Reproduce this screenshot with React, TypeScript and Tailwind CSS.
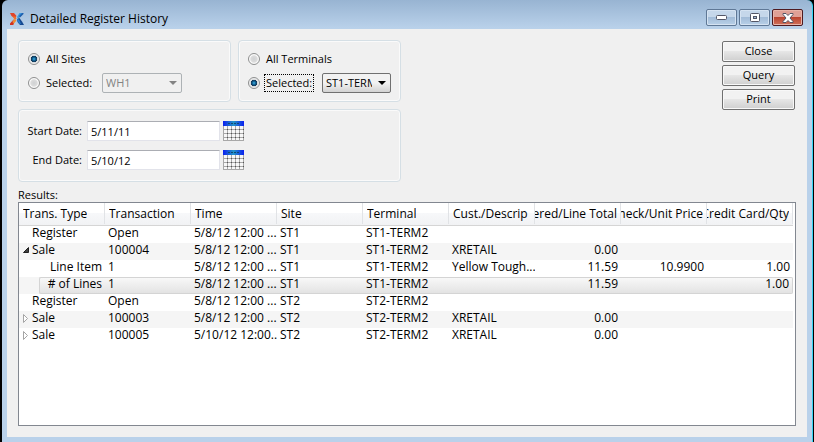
import React from "react";

const UI = "font-['Open_Sans',sans-serif]";

function Logo() {
  return (
    <svg width="14" height="12" viewBox="0 0 14 12" className="shrink-0" aria-hidden="true">
      <path d="M0 0h4l2.500 3-1.500 2.500L1.500 3z" fill="#e0452a" />
      <path d="M2.500 3.500h3l1 2-1.500 1.500z" fill="#f0702a" />
      <path d="M4 6l2.500 1.500L3.500 11l-1.500-1z" fill="#f08a2e" />
      <path d="M4 6 2.500 9 4 11 3 12H0V10.500z" fill="#d2321e" />
      <path d="M9.500 0H13l-1 2-4 4-1-2z" fill="#3a9be0" />
      <path d="M12 0h1.500v1L10 4.500 9 3z" fill="#1f5fae" />
      <path d="M7 6l2.500-1L12 8.500 14 12h-4L7.500 9z" fill="#174a92" />
      <path d="M7 6l2 .500L11 11l-2-.500z" fill="#2b7fd0" />
    </svg>
  );
}

function CalendarIcon() {
  return (
    <svg width="21" height="20" viewBox="0 0 21 20" aria-hidden="true">
      <defs>
        <linearGradient id="calHead" x1="0" x2="1" y1="0" y2="0">
          <stop offset="0" stopColor="#0a1ef0" />
          <stop offset=".5" stopColor="#2394c8" />
          <stop offset="1" stopColor="#0a1ef0" />
        </linearGradient>
      </defs>
      <rect width="21" height="20" fill="#f8f8f8" />
      <rect width="21" height="5" fill="url(#calHead)" />
      <path d="M5 2.500h11" stroke="#114a70" strokeDasharray="2 1" />
      <path d="M.5 5v15M4.500 5v15M8.500 5v15M12.500 5v15M16.500 5v15M20.500 5v15M0 8.500h21M0 12.500h21M0 16.500h21M0 19.500h21" stroke="#a8a8a8" />
      <path d="M4 8.500h17M4 12.500h17M4 16.500h17" stroke="#555" strokeDasharray="1 3" />
    </svg>
  );
}

function Radio(props: { name: string; label: string; checked?: boolean; focus?: boolean }) {
  return (
    <label className="flex h-5 items-center gap-1">
      <input
        type="radio"
        name={props.name}
        defaultChecked={props.checked}
        className="size-3 appearance-none rounded-full border border-[#8e8f8f] bg-[radial-gradient(circle,#cfd1d3_0,#dcdcdc_45%,#fafafa_60%)] checked:bg-[radial-gradient(circle_at_50%_50%,#3fb4e8_0,#0f5b8c_25%,#12304c_45%,#d8dadc_50%,#f4f4f4_70%)]"
      />
      <span className={`border border-dotted px-px leading-4 ${props.focus ? "border-black" : "border-transparent"}`}>
        {props.label}
      </span>
    </label>
  );
}

function Combo(props: { label: string; value: string; disabled?: boolean; width: string }) {
  return (
    <div className={`relative h-5 ${props.width}`}>
      <select
        aria-label={props.label}
        disabled={props.disabled}
        className={`size-full appearance-none overflow-hidden rounded-xs border pr-[18px] pl-[3px] ${
          props.disabled
            ? "border-[#adb2b5] bg-[#f0f0f0] text-[#838383]"
            : "border-[#707070] bg-linear-to-b from-[#f2f2f2] from-50% to-[#d2d2d2] text-black"
        }`}
      >
        <option>{props.value}</option>
      </select>
      <svg width="8" height="4" viewBox="0 0 8 4" className="pointer-events-none absolute top-2 right-[5px]" aria-hidden="true">
        <path d="M0 0h8L4 4z" fill={props.disabled ? "#838383" : "#000"} />
      </svg>
    </div>
  );
}

function DateRow(props: { id: string; label: string; value: string }) {
  return (
    <div className="flex h-5 items-center">
      <label htmlFor={props.id} className="w-[63px] text-right">
        {props.label}
      </label>
      <input
        id={props.id}
        type="text"
        defaultValue={props.value}
        className="ml-[5px] h-5 w-[133px] border border-[#e2e3ea] border-t-[#abadb3] bg-white px-[3px]"
      />
      <button type="button" aria-label={`Pick ${props.label}`} className="ml-[3px]">
        <CalendarIcon />
      </button>
    </div>
  );
}

const PANEL = "rounded-sm border border-[#d5dfe5] shadow-[inset_0_0_0_1px_#fafafa]";

const columns = ["Trans. Type", "Transaction", "Time", "Site", "Terminal", "Cust./Descrip", "ered/Line Total", "Check/Unit Price", "Credit Card/Qty"];

type Row = { kind: "leaf" | "open" | "closed" | "child"; cells: string[]; selected?: boolean };

const rows: Row[] = [
  { kind: "leaf", cells: ["Register", "Open", "5/8/12 12:00 ...", "ST1", "ST1-TERM2", "", "", "", ""] },
  { kind: "open", cells: ["Sale", "100004", "5/8/12 12:00 ...", "ST1", "ST1-TERM2", "XRETAIL", "0.00", "", ""] },
  { kind: "child", cells: ["Line Item", "1", "5/8/12 12:00 ...", "ST1", "ST1-TERM2", "Yellow Tough...", "11.59", "10.9900", "1.00"] },
  { kind: "child", cells: ["# of Lines", "1", "5/8/12 12:00 ...", "ST1", "ST1-TERM2", "", "11.59", "", "1.00"], selected: true },
  { kind: "leaf", cells: ["Register", "Open", "5/8/12 12:00 ...", "ST2", "ST2-TERM2", "", "", "", ""] },
  { kind: "closed", cells: ["Sale", "100003", "5/8/12 12:00 ...", "ST2", "ST2-TERM2", "XRETAIL", "0.00", "", ""] },
  { kind: "closed", cells: ["Sale", "100005", "5/10/12 12:00...", "ST2", "ST2-TERM2", "XRETAIL", "0.00", "", ""] },
];

const SELECTED = "border-y border-[#d4d4d4] bg-linear-to-b from-[#f8f8f8] to-[#e3e3e3]";

function TreeCell({ row }: { row: Row }) {
  const text = row.cells[0];
  if (row.kind === "child") {
    return (
      <div className={`ml-5 flex h-[17px] items-center justify-end rounded-l-xs pr-[3px] pb-0.5 ${row.selected ? `border-l ${SELECTED}` : ""}`}>
        {text}
      </div>
    );
  }
  return (
    <div className="flex h-[17px] items-center pb-0.5">
      <span className="flex w-[13px] justify-center">
        {row.kind === "open" && (
          <svg width="6" height="6" viewBox="0 0 6 6" aria-hidden="true">
            <path d="M5.500 .500v5h-5z" fill="#404040" stroke="#202020" />
          </svg>
        )}
        {row.kind === "closed" && (
          <svg width="6" height="9" viewBox="0 0 6 9" aria-hidden="true">
            <path d="M.5 .500v8l4-4z" fill="#fff" stroke="#a5a5a5" />
          </svg>
        )}
      </span>
      {text}
    </div>
  );
}

function Results() {
  return (
    <table className="w-[774px] table-fixed border-collapse text-xs">
      <colgroup>
        {columns.map((c) => (
          <col key={c} className="w-[86px]" />
        ))}
      </colgroup>
      <thead>
        <tr className="h-[22px] bg-linear-to-b from-white from-45% via-[#f7f8fa] via-45% to-[#f1f2f4]">
          {columns.map((c, i) => (
            <th key={c} scope="col" className="overflow-hidden border-b border-[#d5d5d5] p-0 font-normal">
              <div className={`flex h-[21px] items-center border-r border-[#e1e3e6] whitespace-nowrap ${i > 5 ? "justify-end pr-[3px]" : "pl-1"}`}>
                <span className={`flex min-w-0 overflow-hidden ${i > 5 ? "justify-end" : ""}`}>
                  <span>{c}</span>
                </span>
              </div>
            </th>
          ))}
        </tr>
      </thead>
      <tbody>
        {rows.map((row, r) => (
          <tr key={r} className={`h-[17px] leading-4 ${r % 2 ? "bg-[#f5f5f5]" : ""}`}>
            <td className="p-0 whitespace-nowrap">
              <TreeCell row={row} />
            </td>
            {row.cells.slice(1).map((cell, i) => (
              <td key={i} className="p-0">
                <div
                  className={`flex h-[17px] items-center overflow-hidden pb-0.5 pl-[3px] whitespace-nowrap ${i > 4 ? "justify-end pr-[3px]" : ""} ${
                    row.selected ? SELECTED : ""
                  } ${row.selected && i === 7 ? "rounded-r-xs border-r" : ""}`}
                >
                  {cell}
                </div>
              </td>
            ))}
          </tr>
        ))}
      </tbody>
    </table>
  );
}

export default function App() {
  const caption = "flex h-[17px] items-center justify-center rounded-xs border border-[#5f7896] bg-linear-to-b from-[#c5d7ea] from-45% via-[#a0bad6] via-45% to-[#b8d0e8] shadow-[inset_0_0_0_1px_#d5e3f2]";
  return (
    <div className="flex min-h-screen bg-black pr-px pl-0.5">
      <div className={`flex flex-1 flex-col rounded-t-md border-r border-[#35d5f5] bg-linear-to-b from-[#98b4d2] to-[#b9d1ea] to-[28px] pr-[5px] pb-[5px] pl-[5px] text-[11px] text-black ${UI}`}>
        <header className="flex h-[29px] items-center pt-2 pl-[3px]">
          <Logo />
          <h1 className="ml-[6px] text-xs">Detailed Register History</h1>
          <div className="mr-1 mb-0.5 ml-auto flex gap-[2px]">
            <button type="button" aria-label="Minimize" className={`w-[31px] ${caption}`}>
              <svg width="12" height="6" viewBox="0 0 12 6"><rect x=".5" y=".5" width="10" height="4" rx="1" fill="#fff" stroke="#535666" /></svg>
            </button>
            <button type="button" aria-label="Maximize" className={`w-[31px] ${caption}`}>
              <svg width="12" height="9" viewBox="0 0 12 9"><rect x="1.500" y=".5" width="9" height="8" rx="1" fill="#fff" stroke="#535666" /><rect x="4.500" y="3.500" width="3" height="2" fill="#a0bad6" stroke="#535666" /></svg>
            </button>
            <button type="button" aria-label="Close window" className="flex h-[17px] w-[31px] items-center justify-center rounded-xs border border-[#4e1a20] bg-linear-to-b from-[#dfa096] from-45% via-[#b8402c] via-45% to-[#d0705a] shadow-[inset_0_0_0_1px_#e8b5aa]">
              <svg width="12" height="10" viewBox="0 0 12 10"><path d="M1 .500h3l2 2 2-2h3v1L8 5l3 3.500v1H8l-2-2-2 2H1v-1L4 5 1 1.500z" fill="#fff" stroke="#535666" /></svg>
            </button>
          </div>
        </header>
        <main className="flex flex-1 flex-col bg-[#f0f0f0] px-[11px] pt-[11px] pb-[11px]">
          <div className="flex items-start justify-between">
            <div className="grid grid-cols-[213px_163px] gap-x-[7px] gap-y-[7px]">
              <fieldset className={`flex h-[62px] flex-col justify-center gap-1 pl-[9px] ${PANEL}`}>
                <Radio name="sites" label="All Sites" checked />
                <div className="flex">
                  <div className="w-[74px]"><Radio name="sites" label="Selected:" /></div>
                  <Combo label="Site" value="WH1" disabled width="w-20" />
                </div>
              </fieldset>
              <fieldset className={`flex h-[62px] flex-col justify-center gap-1 pl-[9px] ${PANEL}`}>
                <Radio name="terminals" label="All Terminals" />
                <div className="flex">
                  <div className="w-[74px]"><Radio name="terminals" label="Selected:" checked focus /></div>
                  <Combo label="Terminal" value="ST1-TERM2" width="w-[69px]" />
                </div>
              </fieldset>
              <fieldset className={`col-span-2 flex h-[73px] flex-col justify-center gap-[9px] ${PANEL}`}>
                <DateRow id="start" label="Start Date:" value="5/11/11" />
                <DateRow id="end" label="End Date:" value="5/10/12" />
              </fieldset>
            </div>
            <div className="flex w-[74px] flex-col gap-[3px] pt-px pr-px">
              {["Close", "Query", "Print"].map((t) => (
                <button key={t} type="button" className="h-[21px] rounded-xs border border-[#707070] bg-linear-to-b from-[#f2f2f2] from-45% via-[#e6e6e6] via-50% to-[#cfcfcf] shadow-[inset_0_0_0_1px_#f8f8f8]">
                  {t}
                </button>
              ))}
            </div>
          </div>
          <h2 className="mt-[6px] leading-[14px]">Results:</h2>
          <div className="flex-1 overflow-hidden border border-[#828790] bg-white">
            <Results />
          </div>
        </main>
      </div>
    </div>
  );
}
